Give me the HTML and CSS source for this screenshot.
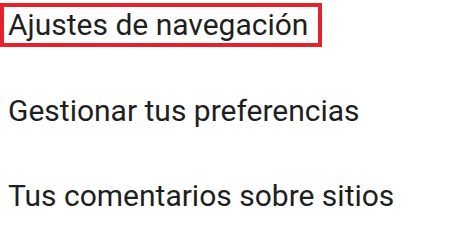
FILE: index.html
```html
<!DOCTYPE html>
<html lang="es">
<head>
<meta charset="utf-8">
<link rel="stylesheet" href="styles.css">
</head>
<body>
<ul class="menu">
  <li class="item item-selected">Ajustes de navegación</li>
  <li class="item">Gestionar tus preferencias</li>
  <li class="item">Tus comentarios sobre sitios</li>
</ul>
</body>
</html>
```
FILE: styles.css
```css
html, body {
  margin: 0;
  padding: 0;
  background: #ffffff;
}
.menu {
  list-style: none;
  margin: 0;
  padding: 7px 0 0 4px;
  display: flex;
  flex-direction: column;
  align-items: flex-start;
  gap: 49.5px;
  font-family: Roboto, "Noto Sans", sans-serif;
  font-size: 30px;
  color: #1f1f1f;
}
.item {
  line-height: 36px;
  padding: 0 10px 0 4px;
}
.item-selected {
  outline: 4px solid #e5222b;
}
```
